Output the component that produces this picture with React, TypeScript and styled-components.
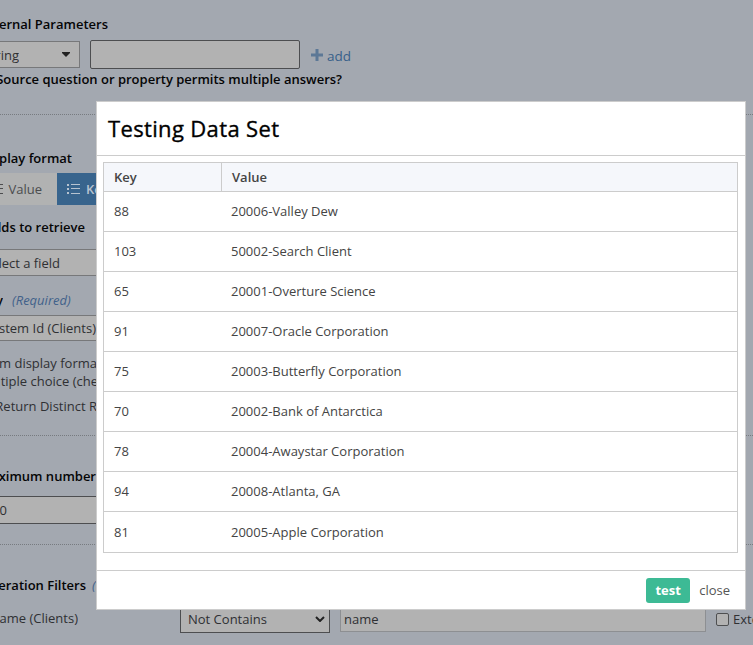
import React from 'react';
import styled, { createGlobalStyle, css } from 'styled-components';

const GlobalStyle = createGlobalStyle`
  *, *::before, *::after { box-sizing: border-box; }
  html, body { margin: 0; padding: 0; overflow: hidden; }
  body {
    font-family: 'Open Sans', 'Noto Sans', sans-serif;
    font-size: 13px;
    line-height: 18px;
    color: #2f3033;
    background: #a3a8b0;
  }
  svg { flex: none; }
`;

const Page = styled.div`
  position: relative;
  width: 753px;
  height: 645px;
  overflow: hidden;
  background: #a3a8b0;
`;

const Form = styled.main`
  display: flex;
  flex-direction: column;
`;

const Line = styled.div<{ $top?: number; $height?: number }>`
  display: flex;
  align-items: center;
  flex: none;
  height: ${p => p.$height ?? 18}px;
  margin-top: ${p => p.$top ?? 0}px;
  white-space: nowrap;
`;

const Clip = styled.span<{ $end: number; $strong?: boolean }>`
  display: flex;
  flex: none;
  justify-content: flex-end;
  width: ${p => p.$end}px;
  white-space: nowrap;
  overflow: hidden;
  ${p => p.$strong && css`font-weight: 600; color: #050506;`}
`;

const FilterName = styled(Clip)`
  padding-bottom: 2px;
`;

const Divider = styled.div<{ $top: number }>`
  flex: none;
  height: 1px;
  margin-top: ${p => p.$top}px;
  background: repeating-linear-gradient(90deg, #777b80 0 1px, #a3a8b0 1px 2px);
`;

const Field = styled.div<{ $width: number; $height: number; $left?: number; $edge?: string; $open?: boolean }>`
  display: flex;
  align-items: center;
  flex: none;
  width: ${p => p.$width}px;
  height: ${p => p.$height}px;
  margin-left: ${p => p.$left ?? 0}px;
  border: 1px solid ${p => p.$edge ?? '#77787a'};
  ${p => p.$open && css`border-left: 0;`}
  background: #b2b2b2;
`;

const TypeSelect = styled(Field)`
  justify-content: space-between;
  padding-right: 9px;
`;

const EntryField = styled(Field)`
  border-radius: 2px;
`;

const OperatorSelect = styled(Field)`
  justify-content: space-between;
  padding: 0 4px 0 7px;
`;

const FilterValue = styled(Field)`
  padding-left: 3px;
`;

const AddLink = styled.a`
  display: flex;
  align-items: center;
  gap: 4px;
  margin-left: 11px;
  padding-top: 3px;
  font-size: 13.5px;
  color: #38608a;
  svg { margin-top: -2px; }
`;

const Tab = styled.div<{ $active?: boolean; $width: number }>`
  display: flex;
  align-items: center;
  flex: none;
  width: ${p => p.$width}px;
  height: 32px;
  overflow: hidden;
  background: ${p => (p.$active ? '#38648d' : '#b1b2b2')};
  color: ${p => (p.$active ? '#b7c3d0' : '#4b4c4e')};
  ${p => p.$active && css`font-weight: 600; gap: 6px; padding-left: 10px;`}
`;

const ValueLabel = styled.span`
  display: flex;
  align-items: center;
  justify-content: flex-end;
  gap: 5px;
  width: 42px;
`;

const Hint = styled.em<{ $left: number }>`
  margin-left: ${p => p.$left}px;
  color: #41618a;
`;

const CheckBox = styled.span`
  flex: none;
  width: 13px;
  height: 13px;
  margin: 0 4px 0 10px;
  border: 1px solid #4e4f51;
  border-radius: 2px;
  background: #b2b2b2;
`;

const Dialog = styled.section`
  position: absolute;
  left: 96px;
  top: 101px;
  display: flex;
  flex-direction: column;
  width: 650px;
  height: 509px;
  border: 1px solid #ccc;
  background: #fff;
`;

const DialogHeader = styled.header`
  display: flex;
  align-items: center;
  height: 54px;
  padding: 0 0 2px 11px;
  border-bottom: 1px solid #ccc;
`;

const DialogTitle = styled.h2`
  margin: 0;
  font-size: 22px;
  line-height: 30px;
  font-weight: 400;
  letter-spacing: 0.35px;
  -webkit-text-stroke: 0.35px #000;
  color: #000;
`;

const DialogBody = styled.div`
  flex: 1;
  padding: 6px 7px 0 6px;
`;

const Table = styled.div`
  width: 635px;
  border: 1px solid #ccc;
  color: #444;
`;

const Row = styled.div`
  display: grid;
  grid-template-columns: 117px 1fr;
  align-items: center;
  height: 40px;
  padding-bottom: 1px;
  border-bottom: 1px solid #ccc;
  &:last-child { border-bottom: 0; padding-bottom: 0; }
`;

const HeadRow = styled(Row)`
  align-items: stretch;
  height: 29px;
  padding-bottom: 0;
  background: #f5f7fb;
  font-weight: 600;
  line-height: 28px;
`;

const Cell = styled.span`
  padding-left: 10px;
`;

const ValueHead = styled(Cell)`
  border-left: 1px solid #ccc;
`;

const DialogFooter = styled.footer`
  display: flex;
  align-items: center;
  justify-content: flex-end;
  gap: 9px;
  height: 39px;
  padding-right: 15px;
  border-top: 1px solid #ccc;
`;

const TestButton = styled.button`
  width: 44px;
  height: 25px;
  padding: 0;
  border: 0;
  border-radius: 3px;
  background: #3dba95;
  color: #fff;
  font: 700 13px/24px 'Open Sans', sans-serif;
`;

const CloseButton = styled.button`
  padding: 0;
  border: 0;
  background: none;
  color: #555;
  font: 400 13px/24px 'Open Sans', sans-serif;
`;

const ListIcon = () => (
  <svg width="13" height="10" viewBox="0 0 13 10" fill="currentColor" shapeRendering="crispEdges">
    <path d="M0 0h2v2H0zM4 0h9v1H4zM0 4h2v2H0zM4 4h9v1H4zM0 8h2v2H0zM4 9h9v1H4z" />
  </svg>
);

const rows: [string, string][] = [
  ['88', '20006-Valley Dew'],
  ['103', '50002-Search Client'],
  ['65', '20001-Overture Science'],
  ['91', '20007-Oracle Corporation'],
  ['75', '20003-Butterfly Corporation'],
  ['70', '20002-Bank of Antarctica'],
  ['78', '20004-Awaystar Corporation'],
  ['94', '20008-Atlanta, GA'],
  ['81', '20005-Apple Corporation'],
];

export default function App() {
  return (
    <Page>
      <GlobalStyle />
      <Form>
        <Line $top={15}><Clip $end={108} $strong>External Parameters</Clip></Line>
        <Line $top={7} $height={29}>
          <TypeSelect $width={80} $height={27} $open>
            <Clip $end={19}>String</Clip>
            <svg width="8" height="5" viewBox="0 0 8 5"><path d="M0 0h8v1L4 5 0 1z" fill="#222" /></svg>
          </TypeSelect>
          <EntryField $width={210} $height={29} $left={10} $edge="#4d4e50" />
          <AddLink>
            <svg width="12" height="12" viewBox="0 0 12 12"><path d="M4.5 0h3v4.5H12v3H7.5V12h-3V7.5H0v-3h4.5z" fill="#5d7896" /></svg>
            add
          </AddLink>
        </Line>
        <Line $top={1}><Clip $end={342} $strong>Source question or property permits multiple answers?</Clip></Line>
        <Divider $top={26} />
        <Line $top={34}><Clip $end={72} $strong>Display format</Clip></Line>
        <Line $top={6} $height={32}>
          <Tab $width={57}><ValueLabel><ListIcon />Value</ValueLabel></Tab>
          <Tab $width={80} $active><ListIcon />Key/Value</Tab>
        </Line>
        <Line $top={13}><Clip $end={85} $strong>Fields to retrieve</Clip></Line>
        <Line $top={13} $height={27}>
          <Field $width={160} $height={27} $open><Clip $end={60}>Select a field</Clip></Field>
        </Line>
        <Line $top={15}><Clip $end={3} $strong>Key</Clip><Hint $left={9}>(Required)</Hint></Line>
        <Line $top={6} $height={26}>
          <Field $width={160} $height={26} $open><Clip $end={96}>System Id (Clients)</Clip></Field>
        </Line>
        <Line $top={13}><Clip $end={97}>From display forma</Clip></Line>
        <Line><Clip $end={98}>multiple choice (che</Clip></Line>
        <Line $top={7}><Clip $end={97}>Return Distinct R</Clip></Line>
        <Divider $top={20} />
        <Line $top={31}><Clip $end={96} $strong>Maximum number</Clip></Line>
        <Line $top={11} $height={28}>
          <Field $width={160} $height={28} $edge="#4d4e50" $open><Clip $end={7}>100</Clip></Field>
        </Line>
        <Divider $top={20} />
        <Line $top={31}><Clip $end={86} $strong>Iteration Filters</Clip><Hint $left={6}>(</Hint></Line>
        <Line $top={11} $height={28}>
          <FilterName $end={78}>Name (Clients)</FilterName>
          <OperatorSelect $width={150} $height={28} $left={102} $edge="#4d4e50">
            Not Contains
            <svg width="10" height="6" viewBox="0 0 10 6"><path d="M1 1l4 4 4-4" fill="none" stroke="#222" strokeWidth="2" /></svg>
          </OperatorSelect>
          <FilterValue $width={366} $height={26} $left={10} $edge="#8d8f92">name</FilterValue>
          <CheckBox />
          Extended
        </Line>
      </Form>
      <Dialog role="dialog">
        <DialogHeader><DialogTitle>Testing Data Set</DialogTitle></DialogHeader>
        <DialogBody>
          <Table>
            <HeadRow><Cell>Key</Cell><ValueHead>Value</ValueHead></HeadRow>
            {rows.map(([key, value]) => (
              <Row key={key}><Cell>{key}</Cell><Cell>{value}</Cell></Row>
            ))}
          </Table>
        </DialogBody>
        <DialogFooter>
          <TestButton>test</TestButton>
          <CloseButton>close</CloseButton>
        </DialogFooter>
      </Dialog>
    </Page>
  );
}
